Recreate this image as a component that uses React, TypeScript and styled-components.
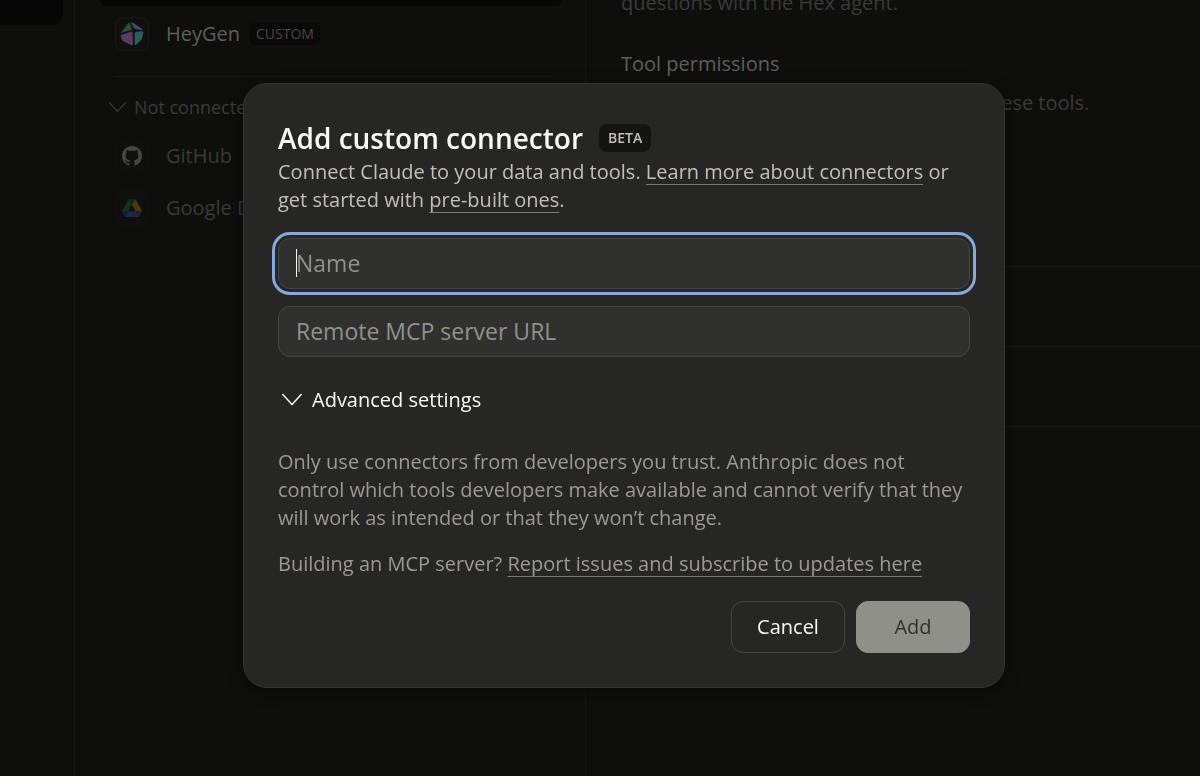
import React from "react";
import styled, { createGlobalStyle } from "styled-components";

const GlobalStyle = createGlobalStyle`
  *, *::before, *::after { box-sizing: border-box; }
  html, body { margin: 0; background: #0e0e0c; }
  body, input, button {
    font-family: "Open Sans", "Noto Sans", sans-serif;
  }
  h1, h2, p, ul { margin: 0; padding: 0; }
`;

const Page = styled.div`
  display: grid;
  grid-template-columns: 75px 511px 1fr;
  height: 100vh;
  overflow: hidden;
  font-size: 20px;
  line-height: 28px;
  color: #3a3a37;
`;

const Sidebar = styled.nav`
  border-right: 1px solid #151513;
`;

const SidebarSelection = styled.div`
  height: 25px;
  margin-right: 11px;
  background: #060606;
  border-bottom-right-radius: 12px;
`;

const ListColumn = styled.section`
  display: flex;
  flex-direction: column;
  padding: 0 23px 0 25px;
  border-right: 1px solid #151513;
`;

const ListSelection = styled.div`
  height: 6px;
  margin-bottom: 2px;
  background: #060606;
  border-radius: 0 0 12px 12px;
`;

const ConnectorList = styled.ul`
  list-style: none;
`;

const ConnectorRow = styled.li<{ $connected?: boolean }>`
  display: flex;
  align-items: center;
  gap: 17px;
  height: 52px;
  padding-left: 15px;
  color: ${(p) => (p.$connected ? "#5f5e5a" : "#3a3a37")};
`;

const IconTile = styled.span<{ $connected?: boolean }>`
  display: flex;
  align-items: center;
  justify-content: center;
  width: 34px;
  height: 34px;
  border: 1px solid ${(p) => (p.$connected ? "#181816" : "#11110f")};
  border-radius: 8px;
  background: ${(p) => (p.$connected ? "#10100e" : "#0f0f0d")};
`;

const Tag = styled.span<{ $bright?: boolean }>`
  display: inline-flex;
  align-items: center;
  height: ${(p) => (p.$bright ? 28 : 22)}px;
  padding: 0 ${(p) => (p.$bright ? 9 : 6)}px;
  border-radius: ${(p) => (p.$bright ? 8 : 5)}px;
  background: ${(p) => (p.$bright ? "#141413" : "#090908")};
  color: ${(p) => (p.$bright ? "#c2c0b6" : "#484845")};
  font-size: 14px;
  font-weight: ${(p) => (p.$bright ? 600 : 500)};
  line-height: 20px;
`;

const NameGroup = styled.span`
  display: flex;
  align-items: center;
  gap: 10px;
`;

const ListDivider = styled.hr`
  width: 436px;
  margin: 16px 0 14px 15px;
  border: 0;
  border-top: 1px solid #171715;
`;

const GroupToggle = styled.button`
  display: flex;
  align-items: center;
  gap: 8px;
  height: 32px;
  margin-bottom: 7px;
  padding: 0 0 0 9px;
  border: 0;
  background: none;
  color: #3a3a37;
  font-size: 18px;
`;

const Detail = styled.main`
  overflow: hidden;
`;

const DetailCopy = styled.div`
  display: flex;
  flex-direction: column;
  justify-content: flex-end;
  height: 117px;
  padding-left: 35px;
`;

const DetailIntro = styled.p`
  margin-bottom: 33px;
  color: #3a3a37;
`;

const DetailHeading = styled.h2`
  margin-bottom: 11px;
  color: #5f5e5a;
  font-size: 20px;
  font-weight: 400;
`;

const ToolList = styled.ul`
  margin: 149px 0 0 35px;
  list-style: none;
`;

const ToolRow = styled.li`
  height: 80px;
  border-top: 1px solid #171715;
`;

const Overlay = styled.div`
  position: fixed;
  inset: 0;
  padding: 83px 195px 0 243px;
`;

const Dialog = styled.form`
  padding: 34px;
  border: 1px solid #343432;
  border-radius: 24px;
  background: #262624;
  box-shadow: 0 4px 16px rgba(0, 0, 0, 0.4);
  color: #c2c0b6;
  font-size: 20px;
  line-height: 28px;
`;

const TitleRow = styled.div`
  display: flex;
  align-items: center;
  gap: 16px;
  height: 40px;
`;

const Title = styled.h1`
  color: #faf9f5;
  font-size: 28px;
  font-weight: 600;
  line-height: 40px;
`;

const TextLink = styled.a`
  color: inherit;
  text-decoration: underline;
  text-decoration-color: #7a7973;
  text-decoration-thickness: 1px;
  text-decoration-skip-ink: none;
  text-underline-offset: 5px;
`;

const Fields = styled.div`
  display: flex;
  flex-direction: column;
  gap: 17px;
  margin: 24px 0 26px;
`;

const Field = styled.label`
  position: relative;
  display: block;
`;

const TextInput = styled.input<{ $active?: boolean }>`
  display: block;
  width: 100%;
  height: 51px;
  padding: 0 17px 2px;
  border: 1px solid #454542;
  border-radius: 12px;
  background: #30302e;
  color: #faf9f5;
  caret-color: transparent;
  font-size: 23px;
  outline: ${(p) => (p.$active ? "3px solid #84a9e0" : "none")};
  outline-offset: 3px;
  &::placeholder { color: #92918a; opacity: 1; }
`;

const Caret = styled.span`
  position: absolute;
  top: 11px;
  left: 18px;
  width: 1px;
  height: 28px;
  background: #faf9f5;
`;

const AdvancedToggle = styled.button`
  display: flex;
  align-items: center;
  gap: 10px;
  height: 33px;
  margin-bottom: 32px;
  padding: 0 0 0 4px;
  border: 0;
  background: none;
  color: #faf9f5;
  font-size: 20px;
  font-weight: 500;
  line-height: 28px;
`;

const Note = styled.p`
  margin-bottom: 18px;
  color: #9c9a92;
`;

const Actions = styled.div`
  display: flex;
  justify-content: flex-end;
  gap: 11px;
  margin-top: 23px;
`;

const Button = styled.button<{ $filled?: boolean }>`
  width: 114px;
  height: 52px;
  padding: 0 0 2px;
  border: 1px solid ${(p) => (p.$filled ? "#8f908a" : "#454542")};
  border-radius: 12px;
  background: ${(p) => (p.$filled ? "#8f908a" : "transparent")};
  color: ${(p) => (p.$filled ? "#30302d" : "#faf9f5")};
  font-size: 20px;
  font-weight: 500;
`;

const Chevron = ({ width, stroke }: { width: number; stroke: number }) => (
  <svg width={width} height={width} viewBox="0 0 20 20" fill="none" aria-hidden="true">
    <path d="M0.8 4.5 L10 14.5 L19.2 4.5" stroke="currentColor" strokeWidth={stroke} strokeLinecap="round" strokeLinejoin="round" />
  </svg>
);

const HeyGenIcon = () => (
  <svg width="24" height="24" viewBox="0 0 72 72" aria-hidden="true">
    <path d="M2 33 L24 4 Q27 1 30 4 L35 20 Q36 24 32 25 Z" fill="#26502f" />
    <path d="M33 2 Q36 0 40 3 L67 21 Q70 25 66 25 L46 21 Q42 20 40 16 Z" fill="#3c4c70" />
    <path d="M2 43 Q1 39 5 38 L32 29 Q38 28 38 33 L39 67 Q38 72 33 69 L10 58 Q7 57 6 54 Z" fill="#5a3a62" />
    <path d="M44 34 Q44 29 49 29 L66 28 Q71 28 70 33 L66 49 Q65 52 63 54 L48 68 Q44 71 44 66 Z" fill="#28605f" />
  </svg>
);

const GitHubIcon = () => (
  <svg width="20" height="20" viewBox="0 0 16 16" fill="#454543" aria-hidden="true">
    <path d="M8 0C3.58 0 0 3.58 0 8c0 3.54 2.29 6.53 5.47 7.59.4.07.55-.17.55-.38 0-.19-.01-.82-.01-1.49-2.01.37-2.53-.49-2.69-.94-.09-.23-.48-.94-.82-1.13-.28-.15-.68-.52-.01-.53.63-.01 1.08.58 1.23.82.72 1.21 1.87.87 2.33.66.07-.52.28-.87.51-1.07-1.78-.2-3.64-.89-3.64-3.95 0-.87.31-1.59.82-2.15-.08-.2-.36-1.02.08-2.12 0 0 .67-.21 2.2.82.64-.18 1.32-.27 2-.27.68 0 1.36.09 2 .27 1.53-1.04 2.2-.82 2.2-.82.44 1.1.16 1.92.08 2.12.51.56.82 1.27.82 2.15 0 3.07-1.87 3.75-3.65 3.95.29.25.54.73.54 1.48 0 1.07-.01 1.93-.01 2.2 0 .21.15.46.55.38A8.013 8.013 0 0016 8c0-4.42-3.58-8-8-8z" />
  </svg>
);

const DriveIcon = () => (
  <svg width="20" height="18" viewBox="0 0 87.3 78" aria-hidden="true">
    <path d="m6.6 66.85 3.85 6.65c.8 1.4 1.95 2.5 3.3 3.3l13.75-23.8h-27.5c0 1.55.4 3.1 1.2 4.5z" fill="#111f48" />
    <path d="m43.65 25-13.75-23.8c-1.35.8-2.5 1.9-3.3 3.3l-25.4 44a9.06 9.06 0 0 0 -1.2 4.5h27.5z" fill="#11331a" />
    <path d="m73.55 76.8c1.35-.8 2.5-1.9 3.3-3.3l1.6-2.75 7.65-13.25c.8-1.4 1.2-2.95 1.2-4.5h-27.502l5.852 11.5z" fill="#3c1a15" />
    <path d="m43.65 25 13.75-23.8c-1.35-.8-2.9-1.2-4.5-1.2h-18.5c-1.6 0-3.15.45-4.5 1.2z" fill="#0e2a15" />
    <path d="m59.8 53h-32.3l-13.75 23.8c1.35.8 2.9 1.2 4.5 1.2h50.8c1.6 0 3.15-.45 4.5-1.2z" fill="#182752" />
    <path d="m73.4 26.5-12.7-22c-.8-1.4-1.95-2.5-3.3-3.3l-13.75 23.8 16.15 28h27.45c0-1.55-.4-3.1-1.2-4.5z" fill="#4c3a0f" />
  </svg>
);

export default function App() {
  return (
    <>
      <GlobalStyle />
      <Page>
        <Sidebar>
          <SidebarSelection />
        </Sidebar>
        <ListColumn>
          <ListSelection />
          <ConnectorList>
            <ConnectorRow $connected>
              <IconTile $connected><HeyGenIcon /></IconTile>
              <NameGroup>HeyGen <Tag>CUSTOM</Tag></NameGroup>
            </ConnectorRow>
          </ConnectorList>
          <ListDivider />
          <GroupToggle type="button">
            <Chevron width={17} stroke={1.4} />
            Not connected
          </GroupToggle>
          <ConnectorList>
            <ConnectorRow><IconTile><GitHubIcon /></IconTile>GitHub</ConnectorRow>
            <ConnectorRow><IconTile><DriveIcon /></IconTile>Google Drive</ConnectorRow>
          </ConnectorList>
        </ListColumn>
        <Detail>
          <DetailCopy>
            <DetailIntro>questions with the Hex agent.</DetailIntro>
            <DetailHeading>Tool permissions</DetailHeading>
            <p>Choose when Claude is allowed to use these tools.</p>
          </DetailCopy>
          <ToolList>
            <ToolRow />
            <ToolRow />
            <ToolRow />
          </ToolList>
        </Detail>
      </Page>
      <Overlay>
        <Dialog role="dialog" aria-modal="true" aria-labelledby="dialog-title" onSubmit={(e) => e.preventDefault()}>
          <TitleRow>
            <Title id="dialog-title">Add custom connector</Title>
            <Tag $bright>BETA</Tag>
          </TitleRow>
          <p>
            Connect Claude to your data and tools. <TextLink href="#learn">Learn more about connectors</TextLink> or
            get started with <TextLink href="#directory">pre-built ones</TextLink>.
          </p>
          <Fields>
            <Field>
              <TextInput $active autoFocus aria-label="Name" placeholder="Name" />
              <Caret />
            </Field>
            <Field>
              <TextInput aria-label="Remote MCP server URL" placeholder="Remote MCP server URL" />
            </Field>
          </Fields>
          <AdvancedToggle type="button" aria-expanded="false">
            <Chevron width={20} stroke={1.5} />
            Advanced settings
          </AdvancedToggle>
          <Note>
            Only use connectors from developers you trust. Anthropic does not control which tools developers make
            available and cannot verify that they will work as intended or that they won’t change.
          </Note>
          <Note>
            Building an MCP server? <TextLink href="#updates">Report issues and subscribe to updates here</TextLink>
          </Note>
          <Actions>
            <Button type="button">Cancel</Button>
            <Button type="submit" $filled>Add</Button>
          </Actions>
        </Dialog>
      </Overlay>
    </>
  );
}
